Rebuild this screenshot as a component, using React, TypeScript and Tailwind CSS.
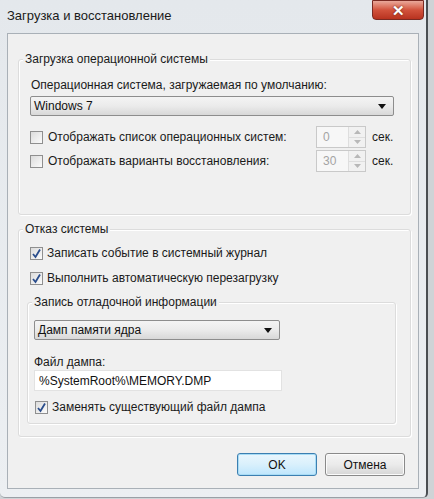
import React from 'react'

const font = { fontFamily: '"Liberation Sans", Arial, sans-serif' }

function CheckBox({ checked }: { checked?: boolean }) {
  return (
    <div className="w-[13px] h-[13px] border border-[#8f8f8f] bg-gradient-to-br from-[#dcdcdc] to-[#fbfbfb] flex items-center justify-center shrink-0">
      {checked && (
        <svg width="11" height="11" viewBox="0 0 11 11">
          <path d="M2 6 L4.5 9 L9 1.5" fill="none" stroke="#2a4d8c" strokeWidth="1.8" />
        </svg>
      )}
    </div>
  )
}

function Combo({ text, w }: { text: string; w: string }) {
  return (
    <div className={`${w} h-[20px] border border-[#8d8d8d] rounded-[2px] bg-gradient-to-b from-[#f4f4f4] via-[#ebebeb] to-[#d8d8d8] flex items-center justify-between pl-[3px] pr-[7px]`}>
      <span className="text-[12px] leading-[16px] text-[#111]">{text}</span>
      <svg width="8" height="5" viewBox="0 0 8 5">
        <path d="M0 0 H8 L4 5 Z" fill="#111" />
      </svg>
    </div>
  )
}

function Spinner({ value }: { value: string }) {
  return (
    <div className="flex h-[22px] w-[50px] border border-[#c9c9c9] bg-[#f7f7f7]">
      <div className="flex-1 pl-[6px] flex items-center text-[12px] text-[#a4a4a4]">{value}</div>
      <div className="w-[17px] flex flex-col border-l border-[#dedede]">
        <div className="flex-1 flex items-center justify-center border-b border-[#dedede] bg-[#f1f1f1]">
          <svg width="7" height="4" viewBox="0 0 7 4"><path d="M0 4 L3.5 0 L7 4 Z" fill="#b8b8b8" /></svg>
        </div>
        <div className="flex-1 flex items-center justify-center bg-[#f1f1f1]">
          <svg width="7" height="4" viewBox="0 0 7 4"><path d="M0 0 L3.5 4 L7 0 Z" fill="#b8b8b8" /></svg>
        </div>
      </div>
    </div>
  )
}

function Group({ label, className, children }: { label: string; className: string; children: React.ReactNode }) {
  return (
    <div className={`border border-[#dcdcdc] rounded-[3px] shadow-[inset_1px_1px_0_#ffffff,1px_1px_0_#ffffff] ${className}`}>
      <div className="-mt-[9px] ml-[4px] px-[2px] w-fit bg-[#f0f0f0] text-[12px] leading-[16px] text-[#1a1a1a]">{label}</div>
      {children}
    </div>
  )
}

export default function App() {
  return (
    <div className="w-[434px] h-[499px] bg-[#cfd3d6] overflow-hidden" style={font}>
      <div className="w-[428px] h-[498px] bg-gradient-to-b from-[#e4e8ec] to-[#eceff2] border-r-2 border-[#4a4e52] border-b border-b-[#9aa0a6] rounded-b-[5px] flex flex-col">
        {/* title bar */}
        <div className="h-[33px] flex items-start justify-between">
          <div className="pl-[7px] pt-[8px] text-[13px] leading-[16px] text-[#1a1a1a]">Загрузка и восстановление</div>
          <div className="w-[52px] h-[20px] mr-[2px] rounded-b-[4px] border border-[#7a2a22] bg-gradient-to-b from-[#e9a89a] via-[#d2523c] to-[#b8321f] flex items-center justify-center">
            <span className="text-white text-[15px] font-bold leading-none [text-shadow:0_0_2px_#5a1a10]">✕</span>
          </div>
        </div>

        {/* content */}
        <div className="mx-[7px] h-[456px] border border-[#a9b0b7] bg-[#f0f0f0] flex flex-col">
          <Group label="Загрузка операционной системы" className="ml-[10px] mt-[25px] w-[393px] h-[156px]">
            <div className="pl-[12px] pt-[10px] text-[12px] leading-[16px] text-[#1a1a1a]">Операционная система, загружаемая по умолчанию:</div>
            <div className="pl-[11px] pt-[3px]">
              <Combo text="Windows 7" w="w-[364px]" />
            </div>
            <div className="pl-[11px] pt-[10px] flex flex-col gap-[2px]">
              <div className="flex items-center h-[22px]">
                <CheckBox />
                <span className="ml-[5px] text-[12px] text-[#1a1a1a] w-[268px]">Отображать список операционных систем:</span>
                <Spinner value="0" />
                <span className="ml-[6px] text-[12px] text-[#1a1a1a]">сек.</span>
              </div>
              <div className="flex items-center h-[22px]">
                <CheckBox />
                <span className="ml-[5px] text-[12px] text-[#1a1a1a] w-[268px]">Отображать варианты восстановления:</span>
                <Spinner value="30" />
                <span className="ml-[6px] text-[12px] text-[#1a1a1a]">сек.</span>
              </div>
            </div>
          </Group>

          <Group label="Отказ системы" className="ml-[10px] mt-[14px] w-[393px] h-[208px]">
            <div className="pl-[11px] pt-[8px] flex flex-col gap-[9px]">
              <div className="flex items-center h-[16px]">
                <CheckBox checked />
                <span className="ml-[4px] text-[12px] text-[#1a1a1a]">Записать событие в системный журнал</span>
              </div>
              <div className="flex items-center h-[16px]">
                <CheckBox checked />
                <span className="ml-[4px] text-[12px] text-[#1a1a1a]">Выполнить автоматическую перезагрузку</span>
              </div>
            </div>
            <Group label="Запись отладочной информации" className="ml-[8px] mt-[16px] w-[369px] h-[122px]">
              <div className="pl-[6px] pt-[10px]">
                <Combo text="Дамп памяти ядра" w="w-[246px]" />
              </div>
              <div className="pl-[6px] pt-[14px] text-[12px] text-[#1a1a1a] leading-[16px]">Файл дампа:</div>
              <div className="ml-[6px] w-[248px] h-[21px] bg-white border border-[#e2e2e2] flex items-center pl-[4px] text-[12px] text-[#111]">
                %SystemRoot%\MEMORY.DMP
              </div>
              <div className="pl-[7px] pt-[7px] flex items-center">
                <CheckBox checked />
                <span className="ml-[4px] text-[12px] text-[#1a1a1a]">Заменять существующий файл дампа</span>
              </div>
            </Group>
          </Group>

          <div className="flex justify-end gap-[8px] pr-[13px] mt-[16px]">
            <button className="w-[80px] h-[23px] rounded-[3px] border border-[#3c7fb1] bg-gradient-to-b from-[#eaf6fd] via-[#d9f0fc] to-[#bee6fd] shadow-[inset_0_0_0_1px_#a8dcf5] text-[12px] text-[#111]">OK</button>
            <button className="w-[80px] h-[23px] rounded-[3px] border border-[#8a8a8a] bg-gradient-to-b from-[#f4f4f4] via-[#ebebeb] to-[#d6d6d6] shadow-[inset_0_0_0_1px_#fbfbfb] text-[12px] text-[#111]">Отмена</button>
          </div>
        </div>
      </div>
    </div>
  )
}
